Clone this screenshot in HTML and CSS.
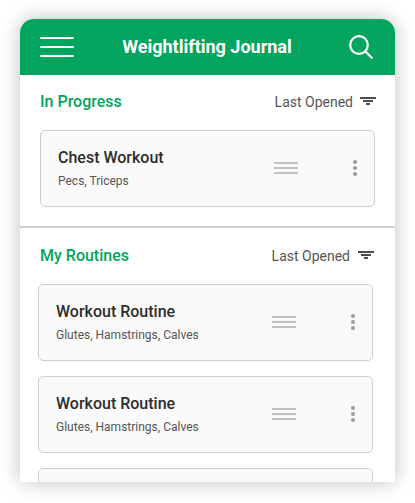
FILE: index.html
```
<!DOCTYPE html>
<html lang="en">
<head>
<meta charset="utf-8">
<title>Weightlifting Journal</title>
<link rel="stylesheet" href="styles.css">
</head>
<body>
<main class="app">
  <header class="topbar">
    <svg class="menu" width="34" height="22" viewBox="0 0 34 22"><path d="M1 2H33M1 11H33M1 20H33"/></svg>
    <h1>Weightlifting Journal</h1>
    <svg class="search" width="26" height="26" viewBox="0 0 26 26"><circle cx="11" cy="11" r="8.8"/><path d="M17.2 17.2L23.8 23.8"/></svg>
  </header>
  <section class="progress">
    <div class="heading">
      <h2>In Progress</h2>
      <div class="sort"><span>Last Opened</span><svg width="16" height="8" viewBox="0 0 16 8"><path d="M0 0H16V2H0zM3 3H13V5H3zM6 6H10V8H6z"/></svg></div>
    </div>
    <article class="card">
      <div class="info"><h3>Chest Workout</h3><p>Pecs, Triceps</p></div>
      <svg class="handle" width="24" height="12" viewBox="0 0 24 12"><path d="M0 0H24V2H0zM0 5H24V7H0zM0 10H24V12H0z"/></svg>
      <svg class="dots" width="4" height="16" viewBox="0 0 4 16"><circle cx="2" cy="2" r="2"/><circle cx="2" cy="8" r="2"/><circle cx="2" cy="14" r="2"/></svg>
    </article>
  </section>
  <section class="routines">
    <div class="heading">
      <h2>My Routines</h2>
      <div class="sort"><span>Last Opened</span><svg width="16" height="8" viewBox="0 0 16 8"><path d="M0 0H16V2H0zM3 3H13V5H3zM6 6H10V8H6z"/></svg></div>
    </div>
    <article class="card">
      <div class="info"><h3>Workout Routine</h3><p>Glutes, Hamstrings, Calves</p></div>
      <svg class="handle" width="24" height="12" viewBox="0 0 24 12"><path d="M0 0H24V2H0zM0 5H24V7H0zM0 10H24V12H0z"/></svg>
      <svg class="dots" width="4" height="16" viewBox="0 0 4 16"><circle cx="2" cy="2" r="2"/><circle cx="2" cy="8" r="2"/><circle cx="2" cy="14" r="2"/></svg>
    </article>
    <article class="card">
      <div class="info"><h3>Workout Routine</h3><p>Glutes, Hamstrings, Calves</p></div>
      <svg class="handle" width="24" height="12" viewBox="0 0 24 12"><path d="M0 0H24V2H0zM0 5H24V7H0zM0 10H24V12H0z"/></svg>
      <svg class="dots" width="4" height="16" viewBox="0 0 4 16"><circle cx="2" cy="2" r="2"/><circle cx="2" cy="8" r="2"/><circle cx="2" cy="14" r="2"/></svg>
    </article>
    <article class="card"></article>
  </section>
</main>
</body>
</html>
```
FILE: styles.css
```
* { box-sizing: border-box; }
html, body { height: 100%; overflow: hidden; }
body {
  margin: 0;
  padding: 19px 20px 21px;
  background: #fff;
  font-family: Roboto, "Liberation Sans", sans-serif;
}
h1, h2, h3, p { margin: 0; }
svg { display: block; flex: none; }
.app {
  height: 463px;
  overflow: hidden;
  background: #fff;
  border-radius: 14px 14px 0 0;
  box-shadow: 0 0 20px rgba(0, 0, 0, 0.25);
}
.topbar {
  height: 56px;
  padding: 0 21px 0 20px;
  display: flex;
  align-items: center;
  justify-content: space-between;
  background: #03a45e;
  color: #fff;
}
.topbar h1 {
  font-size: 18px;
  line-height: 24px;
  font-weight: 700;
  padding-right: 8px;
}
.menu, .search {
  fill: none;
  stroke: #fff;
  stroke-width: 2;
  stroke-linecap: round;
}
.search { stroke-width: 2.2; }
.progress {
  height: 153px;
  padding: 0 20px;
  border-bottom: 2px solid #cfcfcf;
}
.routines { padding: 1px 22px 0 18px; }
.heading {
  height: 55px;
  display: flex;
  align-items: center;
  justify-content: space-between;
  padding-bottom: 1px;
}
.progress .heading { margin-right: -1px; }
.routines .heading { margin: 0 -1px 0 2px; }
h2 {
  color: #03a45e;
  font-size: 16px;
  line-height: 20px;
  font-weight: 500;
}
.sort {
  display: flex;
  align-items: center;
  gap: 7px;
  color: #555;
  font-size: 14px;
  line-height: 18px;
}
.routines .sort { gap: 8px; }
.sort svg { fill: #4d4d4d; margin-bottom: 2px; }
.card {
  height: 77px;
  display: flex;
  align-items: center;
  padding: 0 17px 1px;
  background: #fafafa;
  border: 1px solid #cfcfcf;
  border-radius: 5px;
}
.card + .card { margin-top: 15px; }
.info { flex: 1; }
h3 {
  color: #2d2d2d;
  font-size: 16px;
  line-height: 22px;
  font-weight: 500;
}
.info p {
  margin-top: 4px;
  color: #555;
  font-size: 12px;
  line-height: 16px;
}
.handle { fill: #c1c1c1; margin-right: 55px; }
.dots { fill: #9b9b9b; }
```
